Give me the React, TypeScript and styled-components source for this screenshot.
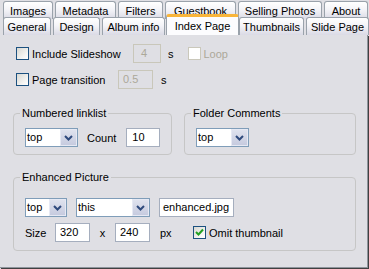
import styled, { createGlobalStyle } from 'styled-components';

const GlobalStyle = createGlobalStyle`
  html, body { margin: 0; padding: 0; }
  body {
    width: 369px;
    height: 269px;
    overflow: hidden;
    background: #dfdfe4;
    font-family: 'Liberation Sans', Arial, sans-serif;
    font-size: 11px;
    color: #000;
  }
`;

const Window = styled.div`
  width: 369px;
  height: 269px;
  display: flex;
  flex-direction: column;
`;

const TabStrip = styled.div`
  display: flex;
  flex-direction: column;
  padding: 1px 0 0 3px;
`;

const TabRow = styled.div<{ $h: number }>`
  display: flex;
  gap: 2px;
  height: ${p => p.$h}px;
  align-items: flex-start;
`;

const Tab = styled.div<{ $w: number; $active?: boolean }>`
  box-sizing: border-box;
  width: ${p => p.$w}px;
  height: 18px;
  padding-top: 3px;
  border: 1px solid #9aa2ab;
  border-bottom: none;
  border-radius: 3px 3px 0 0;
  background: linear-gradient(#ffffff, #f4f4f8 45%, #dadae5);
  text-align: center;
  line-height: 13px;
  white-space: nowrap;
  position: relative;
  ${p =>
    p.$active &&
    `
    margin: -3px -2px 0 -1px;
    width: ${p.$w + 3}px;
    height: 21px;
    border-top: 3px solid #f9b53a;
    background: #fcfcfe;
    z-index: 1;
  `}
`;

const Panel = styled.div`
  flex: 1;
  display: flex;
  flex-direction: column;
  padding: 9px 0 0 13px;
  border-right: 1px solid #8e949c;
  border-bottom: 1px solid #8e949c;
  box-shadow: 1px 1px 0 #404040;
  margin: 0 1px 1px 0;
  background: #dfdfe4;
`;

const Row = styled.div<{ $top?: number; $pl?: number }>`
  display: flex;
  align-items: center;
  height: 19px;
  margin-top: ${p => p.$top ?? 0}px;
  padding-left: ${p => p.$pl ?? 0}px;
`;

const Label = styled.span<{ $w?: number; $ml?: number; $disabled?: boolean; $center?: boolean }>`
  display: inline-block;
  width: ${p => (p.$w ? `${p.$w}px` : 'auto')};
  margin-left: ${p => p.$ml ?? 0}px;
  color: ${p => (p.$disabled ? '#aca899' : '#000')};
  text-align: ${p => (p.$center ? 'center' : 'left')};
  white-space: nowrap;
`;

const Box = styled.span<{ $disabled?: boolean; $ml?: number }>`
  box-sizing: border-box;
  width: 13px;
  height: 13px;
  flex: none;
  margin-left: ${p => p.$ml ?? 0}px;
  margin-right: 3px;
  border: 1px solid ${p => (p.$disabled ? '#cac8bb' : '#1c5180')};
  background: ${p => (p.$disabled ? '#ffffff' : 'linear-gradient(135deg, #d8d8d2, #f6f6f4 70%, #ffffff)')};
  display: flex;
  align-items: center;
  justify-content: center;
`;

const CheckBox = ({ checked, disabled, ml }: { checked?: boolean; disabled?: boolean; ml?: number }) => (
  <Box $disabled={disabled} $ml={ml}>
    {checked && (
      <svg width="9" height="9" viewBox="0 0 9 9">
        <path d="M1 4 L3.5 6.5 L8 1.5" fill="none" stroke="#21a121" strokeWidth="2" />
      </svg>
    )}
  </Box>
);

const TextBox = styled.span<{ $w: number; $ml?: number; $disabled?: boolean; $pl?: number }>`
  box-sizing: border-box;
  width: ${p => p.$w}px;
  height: 19px;
  flex: none;
  margin-left: ${p => p.$ml ?? 0}px;
  padding-left: ${p => p.$pl ?? 4}px;
  border: 1px solid ${p => (p.$disabled ? '#c9c7ba' : '#a5aebe')};
  background: ${p => (p.$disabled ? 'transparent' : '#fff')};
  color: ${p => (p.$disabled ? '#aca899' : '#000')};
  line-height: 17px;
  white-space: nowrap;
`;

const ComboFrame = styled.span<{ $w: number; $ml?: number }>`
  box-sizing: border-box;
  width: ${p => p.$w}px;
  height: 19px;
  flex: none;
  margin-left: ${p => p.$ml ?? 0}px;
  border: 1px solid #7f9db9;
  background: #fff;
  display: flex;
  align-items: stretch;
  line-height: 17px;
`;

const ComboText = styled.span`
  flex: 1;
  padding-left: 1px;
`;

const ComboButton = styled.span`
  box-sizing: border-box;
  width: 17px;
  border: 1px solid #e6e9f4;
  background: linear-gradient(#dfe2ee, #c6cbdf);
  display: flex;
  align-items: center;
  justify-content: center;
`;

const Combo = ({ w, ml, value }: { w: number; ml?: number; value: string }) => (
  <ComboFrame $w={w} $ml={ml}>
    <ComboText>{value}</ComboText>
    <ComboButton>
      <svg width="9" height="6" viewBox="0 0 9 6">
        <path d="M1 1 L4.5 4.5 L8 1" fill="none" stroke="#2f4a7d" strokeWidth="2" />
      </svg>
    </ComboButton>
  </ComboFrame>
);

const GroupRow = styled.div`
  display: flex;
  gap: 12px;
  margin-top: 18px;
`;

const Group = styled.fieldset<{ $w: number; $pt: number; $pb: number; $top?: number }>`
  box-sizing: border-box;
  width: ${p => p.$w}px;
  margin: ${p => p.$top ?? 0}px 0 0 0;
  padding: ${p => p.$pt}px 0 ${p => p.$pb}px 11px;
  border: 1px solid #c6c6c6;
  border-radius: 4px;
  min-inline-size: 0;
`;

const Legend = styled.legend`
  padding: 0 2px;
  margin-left: -5px;
  line-height: 13px;
`;

const rowOneTabs = [
  { label: 'Images', w: 50 },
  { label: 'Metadata', w: 61 },
  { label: 'Filters', w: 45 },
  { label: 'Guestbook', w: 71 },
  { label: 'Selling Photos', w: 84 },
  { label: 'About', w: 44 },
];

const rowTwoTabs = [
  { label: 'General', w: 48 },
  { label: 'Design', w: 47 },
  { label: 'Album info', w: 63 },
  { label: 'Index Page', w: 70, active: true },
  { label: 'Thumbnails', w: 65 },
  { label: 'Slide Page', w: 63 },
];

export default function App() {
  return (
    <>
      <GlobalStyle />
      <Window>
        <TabStrip>
          <TabRow $h={16}>
            {rowOneTabs.map(t => (
              <Tab key={t.label} $w={t.w}>{t.label}</Tab>
            ))}
          </TabRow>
          <TabRow $h={18}>
            {rowTwoTabs.map(t => (
              <Tab key={t.label} $w={t.w} $active={t.active}>{t.label}</Tab>
            ))}
          </TabRow>
        </TabStrip>
        <Panel>
          <Row $pl={3}>
            <CheckBox />
            <Label $w={101}>Include Slideshow</Label>
            <TextBox $w={28} $pl={7} $disabled>4</TextBox>
            <Label $ml={7}>s</Label>
            <CheckBox disabled ml={14} />
            <Label $disabled>Loop</Label>
          </Row>
          <Row $pl={3} $top={7}>
            <CheckBox />
            <Label $w={86}>Page transition</Label>
            <TextBox $w={35} $disabled>0.5</TextBox>
            <Label $ml={8}>s</Label>
          </Row>
          <GroupRow>
            <Group $w={159} $pt={8} $pb={7}>
              <Legend>Numbered linklist</Legend>
              <Row>
                <Combo w={53} value="top" />
                <Label $ml={9}>Count</Label>
                <TextBox $w={34} $ml={10} $pl={5}>10</TextBox>
              </Row>
            </Group>
            <Group $w={172} $pt={8} $pb={7}>
              <Legend>Folder Comments</Legend>
              <Row>
                <Combo w={53} value="top" />
              </Row>
            </Group>
          </GroupRow>
          <Group $w={343} $pt={14} $pb={8} $top={16}>
            <Legend>Enhanced Picture</Legend>
            <Row>
              <Combo w={42} value="top" />
              <Combo w={74} ml={9} value="this" />
              <TextBox $w={75} $ml={9} $pl={3}>enhanced.jpg</TextBox>
            </Row>
            <Row $top={6}>
              <Label $w={30}>Size</Label>
              <TextBox $w={35}>320</TextBox>
              <Label $w={25} $center>x</Label>
              <TextBox $w={35}>240</TextBox>
              <Label $w={33} $ml={10}>px</Label>
              <CheckBox checked />
              <Label>Omit thumbnail</Label>
            </Row>
          </Group>
        </Panel>
      </Window>
    </>
  );
}
